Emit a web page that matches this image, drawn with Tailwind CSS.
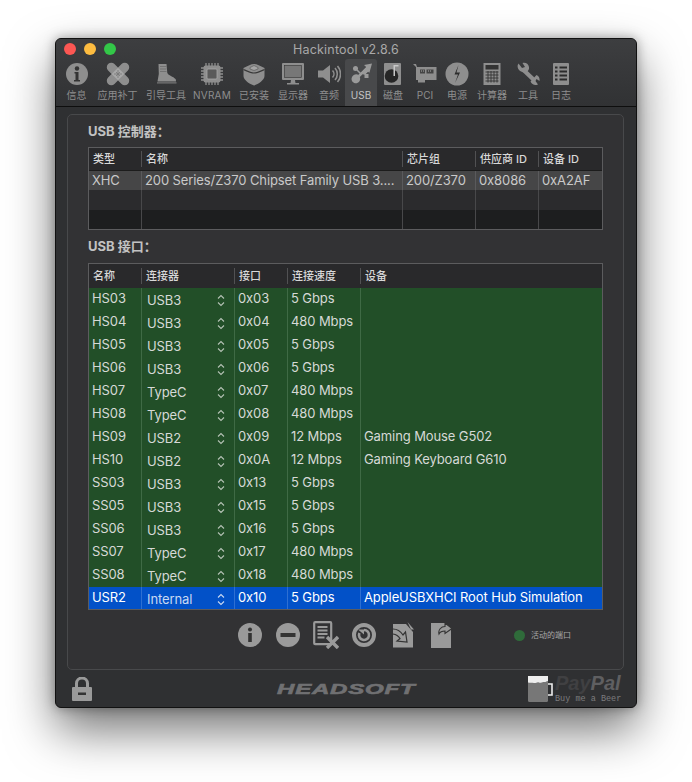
<!DOCTYPE html>
<html lang="zh">
<head>
  <meta charset="UTF-8" />
  <title>Hackintool v2.8.6</title>
  <script src="https://cdn.jsdelivr.net/npm/@tailwindcss/browser@4"></script>
</head>
<body class="w-[692px] h-[782px] overflow-hidden bg-white pt-[38px] pl-[55px] font-['Inter','Noto_Sans_CJK_SC',sans-serif]">
  <svg class="hidden">
    <symbol id="updown" viewBox="0 0 8 13"><path d="M1 4.500 4 1.500 7 4.500M1 8.500 4 11.500 7 8.500" fill="none" stroke="currentColor" stroke-width="1.100"/></symbol>
  </svg>

  <div class="w-[582px] h-[670px] rounded-[6px] border border-[#111] bg-[#2f3032] shadow-[0_22px_48px_rgba(0,0,0,0.55),0_0_12px_rgba(0,0,0,0.35)] flex flex-col overflow-hidden">
    <!-- title + toolbar -->
    <div class="h-[68px] bg-gradient-to-b from-[#3d3e40] to-[#313234] border-b border-[#0e0e0e] shrink-0">
      <div class="relative h-[21px] flex items-center justify-center">
        <div class="absolute left-[8px] top-[4px] flex gap-[8px]">
          <span class="w-[12px] h-[12px] rounded-full bg-[#fc5753]"></span>
          <span class="w-[12px] h-[12px] rounded-full bg-[#fdbc40]"></span>
          <span class="w-[12px] h-[12px] rounded-full bg-[#33c748]"></span>
        </div>
        <span class="text-[12.5px] tracking-[0.2px] text-[#a9a9a9] mt-[1px]">Hackintool v2.8.6</span>
      </div>
      <div class="flex pl-[6px] h-[46px] text-[#8e8e8e]">
        <div class="w-[29px] flex flex-col items-center">
          <svg width="24" height="24" viewBox="0 0 24 24" class="mt-[2px]"><circle cx="12" cy="12" r="11" fill="#8e8e8e"/><circle cx="12" cy="6.500" r="2.200" fill="#333"/><path d="M9.500 10h4v8h1.500v1.500H9V18h1.500v-6.500h-1z" fill="#333"/></svg>
          <span class="text-[10px] leading-[12px] mt-[3px] whitespace-nowrap">信息</span>
        </div>
        <div class="w-[53px] flex flex-col items-center">
          <svg width="26" height="26" viewBox="0 0 26 26" class="mt-[1px]"><g fill="#8e8e8e"><rect x="-1" y="8.500" width="28" height="9" rx="4.500" transform="rotate(45 13 13)"/><rect x="-1" y="8.500" width="28" height="9" rx="4.500" transform="rotate(-45 13 13)"/></g><rect x="8.500" y="8.500" width="9" height="9" transform="rotate(45 13 13)" fill="#a8a8a8"/><path d="M9 13h8M13 9v8M11 11l4 4M15 11l-4 4" stroke="#777" stroke-width=".8"/></svg>
          <span class="text-[10px] leading-[12px] mt-[2px] whitespace-nowrap">应用补丁</span>
        </div>
        <div class="w-[44px] flex flex-col items-center">
          <svg width="24" height="24" viewBox="0 0 24 24" class="mt-[2px]"><path d="M4.500 2h8l.8 9c1 2.500 6 3.500 8.200 6 .5.800.5 1.500.5 2.500H3.500L4.800 12z" fill="#8e8e8e"/><path d="M6 4.500h6.500M6 7h6.500M6 9.500h6.500" stroke="#666" stroke-width=".7"/><path d="M3 20.200h19.500v1.300H3z" fill="#777"/></svg>
          <span class="text-[10px] leading-[12px] mt-[3px] whitespace-nowrap">引导工具</span>
        </div>
        <div class="w-[48px] flex flex-col items-center">
          <svg width="24" height="24" viewBox="0 0 24 24" class="mt-[2px]"><path d="M6 1v22M9 1v22M12 1v22M15 1v22M18 1v22M1 6h22M1 9h22M1 12h22M1 15h22M1 18h22" stroke="#8e8e8e" stroke-width="1.300"/><rect x="3.500" y="3.500" width="17" height="17" rx="2" fill="#8e8e8e"/><rect x="7" y="7" width="10" height="10" rx="1" fill="#5a5a5a" stroke="#a8a8a8" stroke-width=".8"/></svg>
          <span class="text-[10px] leading-[12px] mt-[3px] tracking-[0.2px] whitespace-nowrap">NVRAM</span>
        </div>
        <div class="w-[36px] flex flex-col items-center">
          <svg width="24" height="24" viewBox="0 0 24 24" class="mt-[2px]"><path d="M1.500 6C6 4 9 2 12 2s6 2 10.500 4v8c0 4-6 8-10.500 9.500C7.500 22 1.500 18 1.500 14z" fill="#8e8e8e"/><path d="M1.500 7.500C6 9.500 9 11 12 11s6-1.500 10.500-3.500" fill="none" stroke="#3a3a3a" stroke-width="1.200"/><path d="M8 5.500 12 3.500l4 2v1.500L12 8.500 8 7z" fill="#a5a5a5" stroke="#555" stroke-width=".6"/></svg>
          <span class="text-[10px] leading-[12px] mt-[3px] whitespace-nowrap">已安装</span>
        </div>
        <div class="w-[42px] flex flex-col items-center">
          <svg width="24" height="24" viewBox="0 0 24 24" class="mt-[2px]"><path d="M2 1h20a1 1 0 0 1 1 1v15a1 1 0 0 1-1 1H2a1 1 0 0 1-1-1V2a1 1 0 0 1 1-1z" fill="#8e8e8e"/><rect x="3.500" y="3.500" width="17" height="12" fill="#777" stroke="#333" stroke-width=".6"/><path d="M10 18h4l.5 3H18v1.500H6V21h3.500z" fill="#8e8e8e"/></svg>
          <span class="text-[10px] leading-[12px] mt-[3px] whitespace-nowrap">显示器</span>
        </div>
        <div class="w-[30px] flex flex-col items-center">
          <svg width="24" height="24" viewBox="0 0 24 24" class="mt-[2px]"><path d="M1 8.500h5L13 3v18l-7-5.500H1z" fill="#8e8e8e"/><path d="M15.500 8.500a5 5 0 0 1 0 7M18 6a9 9 0 0 1 0 12M20.500 4a12 12 0 0 1 0 16" fill="none" stroke="#8e8e8e" stroke-width="1.600"/></svg>
          <span class="text-[10px] leading-[12px] mt-[3px] whitespace-nowrap">音频</span>
        </div>
        <div class="w-[32px] flex flex-col items-center bg-[#48494b] rounded-t-[3px] mx-[1px] mt-[-1px] h-[47px]">
          <svg width="24" height="24" viewBox="0 0 24 24" class="mt-[3px]"><path d="M23 1.500 15 3l2.200 2L9.500 12.800C8 12 6.200 12 4.800 13c-2.500 1.600-3 5-1 7s5 1.500 6.500-.5c1-1.400 1.100-3 .5-4.500l2.800-2.800 2.400.5 3-3 1.400 1z" fill="#9a9a9a"/><circle cx="6.500" cy="6.500" r="2.500" fill="#9a9a9a"/><path d="m8 8 4 4" stroke="#9a9a9a" stroke-width="1.600"/><rect x="15.500" y="12" width="4" height="4" fill="#9a9a9a"/></svg>
          <span class="text-[10px] leading-[12px] mt-[3px] text-[#c4c4c4]">USB</span>
        </div>
        <div class="w-[30px] flex flex-col items-center">
          <svg width="24" height="24" viewBox="0 0 24 24" class="mt-[2px]"><rect x="3" y="1" width="17" height="22" rx="1" fill="#8e8e8e"/><circle cx="10.500" cy="14" r="6.800" fill="#262626"/><path d="M12.500 3h5v1.500h-3.500V14h-1.500z" fill="#c8c8c8"/></svg>
          <span class="text-[10px] leading-[12px] mt-[3px] whitespace-nowrap">磁盘</span>
        </div>
        <div class="w-[34px] flex flex-col items-center">
          <svg width="24" height="24" viewBox="0 0 24 24" class="mt-[2px]"><path d="M0 2h3l1 3h19.500v13H12v2.500H5V18H3V5z" fill="#8e8e8e"/><rect x="7" y="7.500" width="5" height="4" fill="#444"/><rect x="13.500" y="7.500" width="7" height="4" fill="#444"/><path d="M8 9h3M15 9h4" stroke="#aaa" stroke-dasharray="1 1"/></svg>
          <span class="text-[10px] leading-[12px] mt-[3px]">PCI</span>
        </div>
        <div class="w-[30px] flex flex-col items-center">
          <svg width="24" height="24" viewBox="0 0 24 24" class="mt-[2px]"><circle cx="12" cy="12" r="11.500" fill="#8e8e8e"/><path d="m13.500 3-4 9.500h3.500L10 21l5-10.500h-3.500z" fill="#2c2c2c"/></svg>
          <span class="text-[10px] leading-[12px] mt-[3px] whitespace-nowrap">电源</span>
        </div>
        <div class="w-[40px] flex flex-col items-center">
          <svg width="24" height="24" viewBox="0 0 24 24" class="mt-[2px]"><rect x="3.500" y="1" width="17" height="22" fill="#8e8e8e"/><rect x="5.500" y="3" width="13" height="4.500" fill="#333"/><path d="M5.500 10h13M5.500 13h13M5.500 16h13M5.500 19h13M8 9v11.500M11 9v11.500M14 9v11.500M17 9v11.500" stroke="#333" stroke-width=".9"/></svg>
          <span class="text-[10px] leading-[12px] mt-[3px] whitespace-nowrap">计算器</span>
        </div>
        <div class="w-[32px] flex flex-col items-center">
          <svg width="24" height="24" viewBox="0 0 24 24" class="mt-[2px]"><path d="M7.500 8 18.500 18.500" stroke="#8e8e8e" stroke-width="4.200"/><path d="M2.500 1.500 6 6l3-1-2.500-4c3-.8 6 .8 6.500 4 .3 2-.5 3.500-2 4.800-2.500 1-5.500.5-7.500-1.300C1.500 6.500.8 3.800 2.500 1.500z" fill="#8e8e8e"/><path d="M14.500 19.500c1 2.500 3.500 4 6 3.500l1.500-.5-2.500-3.500 1-2 3 2c.5-2.500-.5-5-3-6z" fill="#8e8e8e"/></svg>
          <span class="text-[10px] leading-[12px] mt-[3px] whitespace-nowrap">工具</span>
        </div>
        <div class="w-[34px] flex flex-col items-center">
          <svg width="24" height="24" viewBox="0 0 24 24" class="mt-[2px]"><rect x="4" y="1" width="16" height="22" rx="1" fill="#8e8e8e"/><path d="M6 5.500h2.500M10.500 5.500H18M6 9.500h2.500M10.500 9.500H18M6 13.500h2.500M10.500 13.500H18M6 17.500h2.500M10.500 17.500H18" stroke="#2c2c2c" stroke-width="1.800"/></svg>
          <span class="text-[10px] leading-[12px] mt-[3px] whitespace-nowrap">日志</span>
        </div>
      </div>
    </div>

    <!-- main panel -->
    <div class="ml-[11px] mt-[7px] w-[557px] h-[556px] shrink-0 rounded-[5px] border border-[#48494b] bg-[#323234] px-[20px]">
      <div class="h-[32px] flex items-center pt-[1px] text-[13px] font-bold text-[#c2c2c2]">USB 控制器：</div>
      <div class="w-[515px] border border-[#5c5c5e] text-[13px] text-[#c9c9c9] tracking-[-0.1px]">
        <div class="grid grid-cols-[53px_261px_73px_63px_1fr] h-[23px] bg-[#29292b] border-b border-[#1c1c1c] text-[11px] font-medium text-[#d8d8d8] items-center tracking-normal">
          <span class="pl-[4px] border-r border-[#515153]">类型</span>
          <span class="pl-[4px] border-r border-[#515153]">名称</span>
          <span class="pl-[4px] border-r border-[#515153]">芯片组</span>
          <span class="pl-[4px] border-r border-[#515153]">供应商 ID</span>
          <span class="pl-[4px]">设备 ID</span>
        </div>
        <div class="grid grid-cols-[53px_261px_73px_63px_1fr] h-[19px] bg-[#464647] leading-[19px]">
          <span class="pl-[3px] border-r border-[#5a5a5c]">XHC</span>
          <span class="pl-[3px] border-r border-[#5a5a5c] whitespace-nowrap">200 Series/Z370 Chipset Family USB 3....</span>
          <span class="pl-[3px] border-r border-[#5a5a5c]">200/Z370</span>
          <span class="pl-[3px] border-r border-[#5a5a5c]">0x8086</span>
          <span class="pl-[3px]">0xA2AF</span>
        </div>
        <div class="grid grid-cols-[53px_261px_73px_63px_1fr] h-[20px] bg-[#2b2b2d]">
          <span class="border-r border-[#48484a]"></span><span class="border-r border-[#48484a]"></span><span class="border-r border-[#48484a]"></span><span class="border-r border-[#48484a]"></span><span></span>
        </div>
        <div class="grid grid-cols-[53px_261px_73px_63px_1fr] h-[19px] bg-[#1d1e1f]">
          <span class="border-r border-[#48484a]"></span><span class="border-r border-[#48484a]"></span><span class="border-r border-[#48484a]"></span><span class="border-r border-[#48484a]"></span><span></span>
        </div>
      </div>

      <div class="h-[33px] flex items-center pt-[1px] text-[13px] font-bold text-[#c2c2c2]">USB 接口：</div>
      <div class="w-[515px] border border-[#5c5c5e] text-[13px] text-[#d6d9d6] tracking-[-0.1px]">
        <div class="grid grid-cols-[53px_93px_53px_73px_1fr] h-[24px] bg-[#29292b] text-[11px] font-medium text-[#d8d8d8] items-center tracking-normal">
          <span class="pl-[4px] border-r border-[#515153]">名称</span>
          <span class="pl-[4px] border-r border-[#515153]">连接器</span>
          <span class="pl-[4px] border-r border-[#515153]">接口</span>
          <span class="pl-[4px] border-r border-[#515153]">连接速度</span>
          <span class="pl-[4px]">设备</span>
        </div>
        <div class="grid grid-cols-[53px_93px_53px_73px_1fr] h-[23px] bg-[#224f28] leading-[21px]">
          <span class="pl-[3px] border-r border-[#3f6a45]">HS03</span>
          <span class="pl-[5px] pr-[9px] border-r border-[#3f6a45] flex justify-between items-center pt-[2px]">USB3<svg class="w-[8px] h-[13px] text-[#b5c2b5]"><use href="#updown"/></svg></span>
          <span class="pl-[3px] border-r border-[#3f6a45]">0x03</span>
          <span class="pl-[3px] border-r border-[#3f6a45]">5 Gbps</span>
          <span class="pl-[3px]"></span>
        </div>
        <div class="grid grid-cols-[53px_93px_53px_73px_1fr] h-[23px] bg-[#224f28] leading-[21px]">
          <span class="pl-[3px] border-r border-[#3f6a45]">HS04</span>
          <span class="pl-[5px] pr-[9px] border-r border-[#3f6a45] flex justify-between items-center pt-[2px]">USB3<svg class="w-[8px] h-[13px] text-[#b5c2b5]"><use href="#updown"/></svg></span>
          <span class="pl-[3px] border-r border-[#3f6a45]">0x04</span>
          <span class="pl-[3px] border-r border-[#3f6a45]">480 Mbps</span>
          <span class="pl-[3px]"></span>
        </div>
        <div class="grid grid-cols-[53px_93px_53px_73px_1fr] h-[23px] bg-[#224f28] leading-[21px]">
          <span class="pl-[3px] border-r border-[#3f6a45]">HS05</span>
          <span class="pl-[5px] pr-[9px] border-r border-[#3f6a45] flex justify-between items-center pt-[2px]">USB3<svg class="w-[8px] h-[13px] text-[#b5c2b5]"><use href="#updown"/></svg></span>
          <span class="pl-[3px] border-r border-[#3f6a45]">0x05</span>
          <span class="pl-[3px] border-r border-[#3f6a45]">5 Gbps</span>
          <span class="pl-[3px]"></span>
        </div>
        <div class="grid grid-cols-[53px_93px_53px_73px_1fr] h-[23px] bg-[#224f28] leading-[21px]">
          <span class="pl-[3px] border-r border-[#3f6a45]">HS06</span>
          <span class="pl-[5px] pr-[9px] border-r border-[#3f6a45] flex justify-between items-center pt-[2px]">USB3<svg class="w-[8px] h-[13px] text-[#b5c2b5]"><use href="#updown"/></svg></span>
          <span class="pl-[3px] border-r border-[#3f6a45]">0x06</span>
          <span class="pl-[3px] border-r border-[#3f6a45]">5 Gbps</span>
          <span class="pl-[3px]"></span>
        </div>
        <div class="grid grid-cols-[53px_93px_53px_73px_1fr] h-[23px] bg-[#224f28] leading-[21px]">
          <span class="pl-[3px] border-r border-[#3f6a45]">HS07</span>
          <span class="pl-[5px] pr-[9px] border-r border-[#3f6a45] flex justify-between items-center pt-[2px]">TypeC<svg class="w-[8px] h-[13px] text-[#b5c2b5]"><use href="#updown"/></svg></span>
          <span class="pl-[3px] border-r border-[#3f6a45]">0x07</span>
          <span class="pl-[3px] border-r border-[#3f6a45]">480 Mbps</span>
          <span class="pl-[3px]"></span>
        </div>
        <div class="grid grid-cols-[53px_93px_53px_73px_1fr] h-[23px] bg-[#224f28] leading-[21px]">
          <span class="pl-[3px] border-r border-[#3f6a45]">HS08</span>
          <span class="pl-[5px] pr-[9px] border-r border-[#3f6a45] flex justify-between items-center pt-[2px]">TypeC<svg class="w-[8px] h-[13px] text-[#b5c2b5]"><use href="#updown"/></svg></span>
          <span class="pl-[3px] border-r border-[#3f6a45]">0x08</span>
          <span class="pl-[3px] border-r border-[#3f6a45]">480 Mbps</span>
          <span class="pl-[3px]"></span>
        </div>
        <div class="grid grid-cols-[53px_93px_53px_73px_1fr] h-[23px] bg-[#224f28] leading-[21px]">
          <span class="pl-[3px] border-r border-[#3f6a45]">HS09</span>
          <span class="pl-[5px] pr-[9px] border-r border-[#3f6a45] flex justify-between items-center pt-[2px]">USB2<svg class="w-[8px] h-[13px] text-[#b5c2b5]"><use href="#updown"/></svg></span>
          <span class="pl-[3px] border-r border-[#3f6a45]">0x09</span>
          <span class="pl-[3px] border-r border-[#3f6a45]">12 Mbps</span>
          <span class="pl-[3px]">Gaming Mouse G502</span>
        </div>
        <div class="grid grid-cols-[53px_93px_53px_73px_1fr] h-[23px] bg-[#224f28] leading-[21px]">
          <span class="pl-[3px] border-r border-[#3f6a45]">HS10</span>
          <span class="pl-[5px] pr-[9px] border-r border-[#3f6a45] flex justify-between items-center pt-[2px]">USB2<svg class="w-[8px] h-[13px] text-[#b5c2b5]"><use href="#updown"/></svg></span>
          <span class="pl-[3px] border-r border-[#3f6a45]">0x0A</span>
          <span class="pl-[3px] border-r border-[#3f6a45]">12 Mbps</span>
          <span class="pl-[3px]">Gaming Keyboard G610</span>
        </div>
        <div class="grid grid-cols-[53px_93px_53px_73px_1fr] h-[23px] bg-[#224f28] leading-[21px]">
          <span class="pl-[3px] border-r border-[#3f6a45]">SS03</span>
          <span class="pl-[5px] pr-[9px] border-r border-[#3f6a45] flex justify-between items-center pt-[2px]">USB3<svg class="w-[8px] h-[13px] text-[#b5c2b5]"><use href="#updown"/></svg></span>
          <span class="pl-[3px] border-r border-[#3f6a45]">0x13</span>
          <span class="pl-[3px] border-r border-[#3f6a45]">5 Gbps</span>
          <span class="pl-[3px]"></span>
        </div>
        <div class="grid grid-cols-[53px_93px_53px_73px_1fr] h-[23px] bg-[#224f28] leading-[21px]">
          <span class="pl-[3px] border-r border-[#3f6a45]">SS05</span>
          <span class="pl-[5px] pr-[9px] border-r border-[#3f6a45] flex justify-between items-center pt-[2px]">USB3<svg class="w-[8px] h-[13px] text-[#b5c2b5]"><use href="#updown"/></svg></span>
          <span class="pl-[3px] border-r border-[#3f6a45]">0x15</span>
          <span class="pl-[3px] border-r border-[#3f6a45]">5 Gbps</span>
          <span class="pl-[3px]"></span>
        </div>
        <div class="grid grid-cols-[53px_93px_53px_73px_1fr] h-[23px] bg-[#224f28] leading-[21px]">
          <span class="pl-[3px] border-r border-[#3f6a45]">SS06</span>
          <span class="pl-[5px] pr-[9px] border-r border-[#3f6a45] flex justify-between items-center pt-[2px]">USB3<svg class="w-[8px] h-[13px] text-[#b5c2b5]"><use href="#updown"/></svg></span>
          <span class="pl-[3px] border-r border-[#3f6a45]">0x16</span>
          <span class="pl-[3px] border-r border-[#3f6a45]">5 Gbps</span>
          <span class="pl-[3px]"></span>
        </div>
        <div class="grid grid-cols-[53px_93px_53px_73px_1fr] h-[23px] bg-[#224f28] leading-[21px]">
          <span class="pl-[3px] border-r border-[#3f6a45]">SS07</span>
          <span class="pl-[5px] pr-[9px] border-r border-[#3f6a45] flex justify-between items-center pt-[2px]">TypeC<svg class="w-[8px] h-[13px] text-[#b5c2b5]"><use href="#updown"/></svg></span>
          <span class="pl-[3px] border-r border-[#3f6a45]">0x17</span>
          <span class="pl-[3px] border-r border-[#3f6a45]">480 Mbps</span>
          <span class="pl-[3px]"></span>
        </div>
        <div class="grid grid-cols-[53px_93px_53px_73px_1fr] h-[23px] bg-[#224f28] leading-[21px]">
          <span class="pl-[3px] border-r border-[#3f6a45]">SS08</span>
          <span class="pl-[5px] pr-[9px] border-r border-[#3f6a45] flex justify-between items-center pt-[2px]">TypeC<svg class="w-[8px] h-[13px] text-[#b5c2b5]"><use href="#updown"/></svg></span>
          <span class="pl-[3px] border-r border-[#3f6a45]">0x18</span>
          <span class="pl-[3px] border-r border-[#3f6a45]">480 Mbps</span>
          <span class="pl-[3px]"></span>
        </div>
        <div class="grid grid-cols-[53px_93px_53px_73px_1fr] h-[22px] bg-[#0251c8] leading-[20px] text-white">
          <span class="pl-[3px] border-r border-[#2e6fd2]">USR2</span>
          <span class="pl-[5px] pr-[9px] border-r border-[#2e6fd2] flex justify-between items-center pt-[2px] text-[#c9d8f2]">Internal<svg class="w-[8px] h-[13px] text-[#c9d8f2]"><use href="#updown"/></svg></span>
          <span class="pl-[3px] border-r border-[#2e6fd2]">0x10</span>
          <span class="pl-[3px] border-r border-[#2e6fd2]">5 Gbps</span>
          <span class="pl-[3px]">AppleUSBXHCI Root Hub Simulation</span>
        </div>
      </div>

      <!-- action buttons -->
      <div class="relative flex items-center h-[50px] pl-[150px] gap-[14px]">
        <svg width="24" height="24" viewBox="0 0 24 24"><circle cx="12" cy="12" r="12" fill="#9a9a9a"/><circle cx="12" cy="6.500" r="2" fill="#333"/><rect x="10.200" y="10" width="3.600" height="9" fill="#333"/></svg>
        <svg width="24" height="24" viewBox="0 0 24 24"><circle cx="12" cy="12" r="12" fill="#9a9a9a"/><rect x="4.500" y="10" width="15" height="4" fill="#333"/></svg>
        <svg width="26" height="28" viewBox="0 0 26 28" class="-mx-[1px]"><rect x="1.200" y="1.200" width="17" height="22" rx="1" fill="none" stroke="#9a9a9a" stroke-width="2.200"/><path d="M4.500 6h10M4.500 9.500h10M4.500 13h10M4.500 16.500h7" stroke="#9a9a9a" stroke-width="1.800"/><path d="m14 16 11 11M25 16 14 27" stroke="#9a9a9a" stroke-width="3.400"/></svg>
        <svg width="24" height="24" viewBox="0 0 24 24"><circle cx="12" cy="12" r="10" fill="none" stroke="#9a9a9a" stroke-width="4"/><path d="M12 7a5 5 0 1 1-4.600 3" fill="none" stroke="#9a9a9a" stroke-width="2.600"/><path d="M6 6.500h6v5z" fill="#9a9a9a"/></svg>
        <svg width="22" height="26" viewBox="0 0 22 26" class="ml-[2px]"><path d="M1 2h13l7 8v15.500H1z" fill="#9a9a9a"/><path d="M15.500 0 22 7.500h-3z" fill="#9a9a9a"/><path d="M1 7c4 0 8 3 10 6l2.500-3 1.500 10-10-1 3-2.500C6.500 14 4 12.500 1 12" fill="none" stroke="#333" stroke-width="1.200"/></svg>
        <svg width="22" height="26" viewBox="0 0 22 26" class="ml-[2px]"><path d="M1 1h15v25H1z" fill="#9a9a9a"/><path d="M1 6h20v20H1z" fill="#9a9a9a"/><path d="m15 1 7 5.500-7 5V9c-3 0-5 1-6 3-1-4 2-7.500 6-7.500z" fill="#9a9a9a" stroke="#333" stroke-width="1.100"/></svg>
        <div class="absolute left-[426px] top-[20px] flex items-center gap-[6px]">
          <span class="w-[11px] h-[11px] rounded-full bg-[#2f6b3a]"></span>
          <span class="text-[8px] leading-[11px] text-[#a8a8a8] whitespace-nowrap">活动的端口</span>
        </div>
      </div>
    </div>

    <!-- footer -->
    <div class="relative flex-1 flex items-center justify-center">
      <svg width="22" height="24" viewBox="0 0 22 24" class="absolute left-[15px] top-[7px]"><path d="M5.500 11V6.500a5.500 5.500 0 0 1 11 0V11" fill="none" stroke="#9a9a9a" stroke-width="3"/><rect x="1" y="10" width="20" height="14" rx="1" fill="#9a9a9a"/><rect x="7" y="15.500" width="8" height="2.500" fill="#333"/></svg>
      <span class="font-['Liberation_Sans',sans-serif] italic font-bold text-[15px] text-[#707072] tracking-[0.5px] scale-x-[1.6] [-webkit-text-stroke:0.6px_#707072] mt-[2px]">HEADSOFT</span>
      <svg width="26" height="28" viewBox="0 0 26 28" class="absolute left-[471px] top-[5px]"><rect x="1" y="1" width="20" height="26" rx="1.500" fill="#777"/><path d="M1 1h20v5c-2 0-2 1.500-4 1s-3 1.500-5 .5-3 1-5 .5-4 0-6-.5z" fill="#eee"/><path d="M21 9h4v11h-4" fill="none" stroke="#eee" stroke-width="1.600"/></svg>
      <div class="absolute left-[499px] top-[2px] w-[72px]">
        <div class="font-['Liberation_Sans',sans-serif] italic font-bold text-[20px] leading-[22px]"><span class="text-[#404042]">Pay</span><span class="text-[#5f5f61]">Pal</span></div>
        <div class="font-['Liberation_Mono',monospace] text-[8.500px] leading-[10px] text-[#7c7c7e] whitespace-nowrap">Buy me a Beer</div>
      </div>
    </div>
  </div>
</body>
</html>
